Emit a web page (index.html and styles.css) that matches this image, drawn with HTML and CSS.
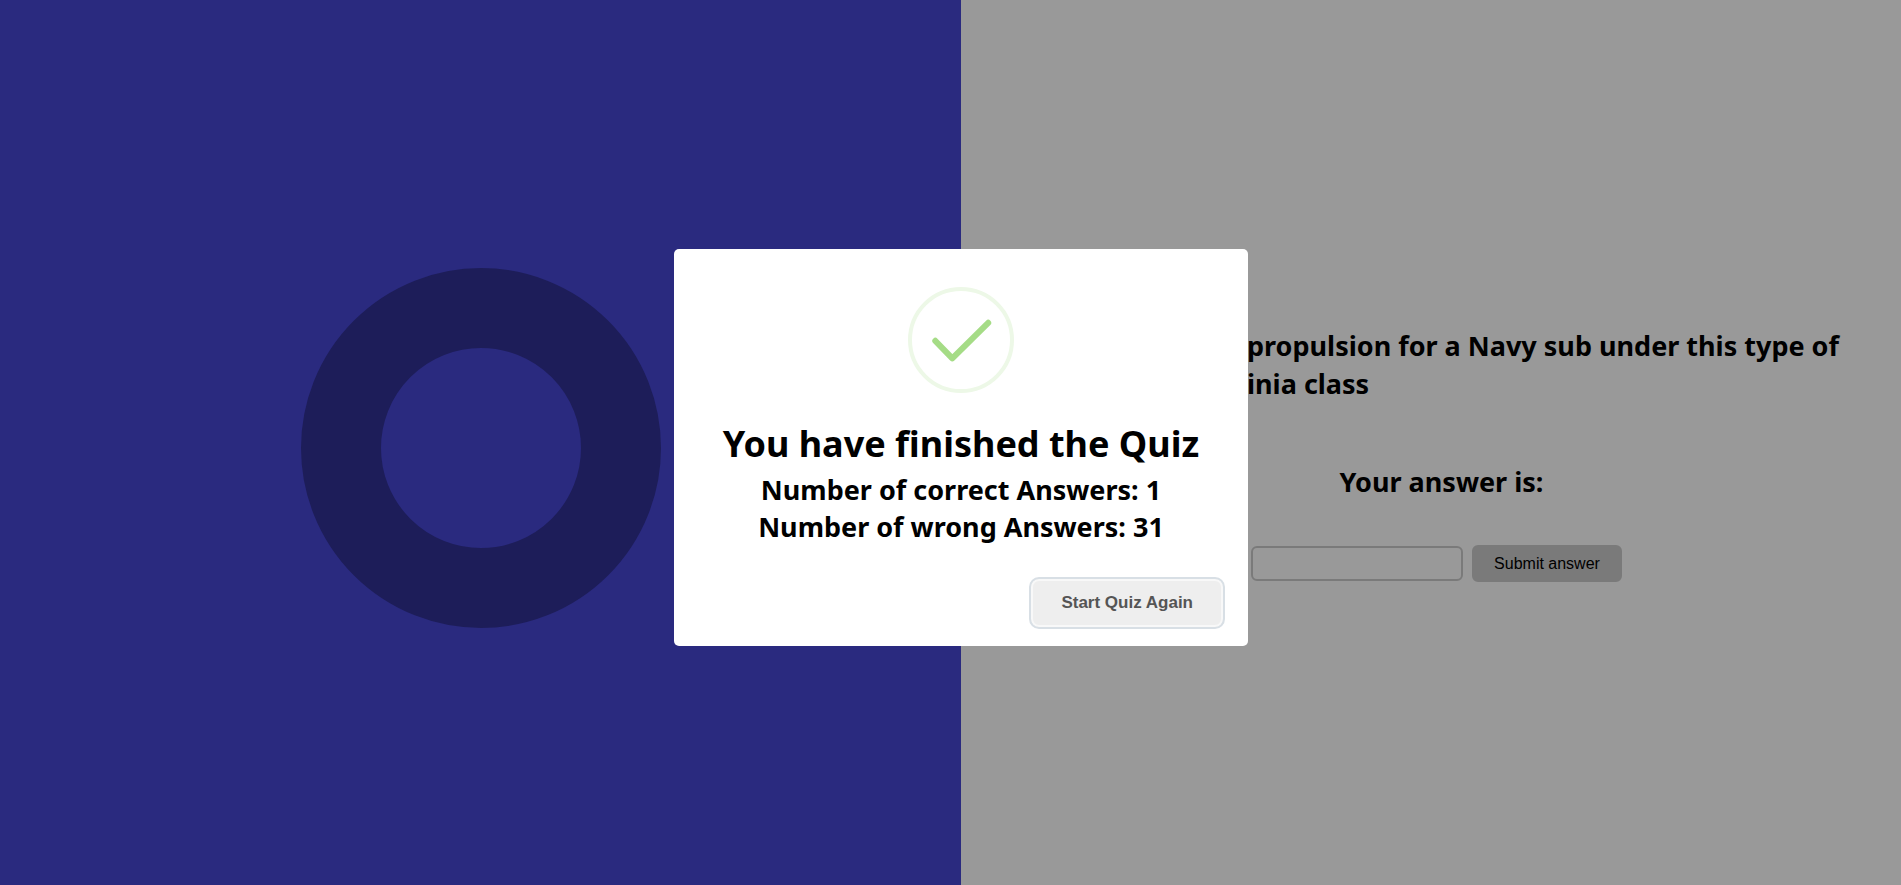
FILE: index.html
```html
<!DOCTYPE html>
<html lang="en">
<head>
<meta charset="utf-8">
<title>Quiz</title>
<link rel="stylesheet" href="styles.css">
</head>
<body>
<div class="page">
  <section class="score-panel">
    <div class="ring"></div>
  </section>
  <main class="quiz-panel">
    <h2 class="question">propulsion for a Navy sub under this type of<br>inia class</h2>
    <label class="answer-label" for="answer">Your answer is:</label>
    <form class="answer-form">
      <input class="answer-input" id="answer" type="text">
      <button class="submit-button" type="button">Submit answer</button>
    </form>
  </main>
  <div class="overlay">
    <div class="modal" role="dialog" aria-labelledby="modal-title">
      <svg class="success-icon" viewBox="0 0 106 106" aria-hidden="true">
        <circle cx="53" cy="53" r="51" fill="none" stroke="#edf8e7" stroke-width="4"/>
        <path d="M27.3 53.8 L44.3 71.4 L80.2 35.8" fill="none" stroke="#a5dc86" stroke-width="6" stroke-linecap="round" stroke-linejoin="round"/>
      </svg>
      <h1 class="modal-title" id="modal-title">You have finished the Quiz</h1>
      <p class="modal-line">Number of correct Answers: 1</p>
      <p class="modal-line">Number of wrong Answers: 31</p>
      <button class="restart-button" type="button">Start Quiz Again</button>
    </div>
  </div>
</div>
</body>
</html>
```
FILE: styles.css
```css
* {
  box-sizing: border-box;
}

html,
body {
  margin: 0;
  height: 100%;
  overflow: hidden;
}

body {
  font-family: "Segoe UI", "Noto Sans", sans-serif;
  color: #000;
  background: #fff;
}

.page {
  position: relative;
  display: grid;
  grid-template-columns: 1fr 1fr;
  width: calc(100% + 21px);
  height: calc(100% + 10px);
}

.score-panel {
  display: flex;
  align-items: center;
  justify-content: center;
  background: #4646d4;
}

.ring {
  width: 360px;
  height: 360px;
  border: 80px solid #313194;
  border-radius: 50%;
}

.quiz-panel {
  display: flex;
  flex-direction: column;
  align-items: center;
  justify-content: center;
  padding-top: 14px;
}

.question,
.answer-label {
  font-size: 27px;
  font-weight: 700;
  line-height: 38px;
}

.question {
  align-self: flex-start;
  margin: 0 0 60px;
  padding-left: 286px;
  white-space: nowrap;
}

.answer-label {
  margin-bottom: 44px;
}

.answer-form {
  display: flex;
  align-items: center;
  gap: 9px;
  padding-right: 10px;
}

.answer-input,
.submit-button {
  font-family: Arial, "Liberation Sans", sans-serif;
  font-size: 16px;
  border: 2px solid #ccc;
  border-radius: 6px;
}

.answer-input {
  width: 212px;
  height: 35px;
  background: #fff;
}

.submit-button {
  height: 37px;
  padding: 0 20px;
  color: #000;
  background: #ccc;
}

.overlay {
  position: absolute;
  inset: 0;
  display: flex;
  align-items: center;
  justify-content: center;
  background: rgba(0, 0, 0, 0.4);
}

.modal {
  display: flex;
  flex-direction: column;
  align-items: center;
  width: 574px;
  padding: 38px 23px 17px;
  background: #fff;
  border-radius: 5px;
}

.success-icon {
  width: 106px;
  height: 106px;
  margin-bottom: 26px;
}

.modal-title {
  margin: 0 0 3px;
  font-size: 36px;
  line-height: 49px;
}

.modal-line {
  margin: 0;
  font-size: 27px;
  font-weight: 700;
  line-height: 37px;
}

.restart-button {
  align-self: flex-end;
  height: 52px;
  margin-top: 32px;
  padding: 0 30px;
  font: bold 17px Arial, "Liberation Sans", sans-serif;
  color: #555;
  background: #eee;
  border: 2px solid #d8dfe5;
  border-radius: 10px;
  box-shadow: inset 0 0 0 2px #f8f8f8;
}
```
